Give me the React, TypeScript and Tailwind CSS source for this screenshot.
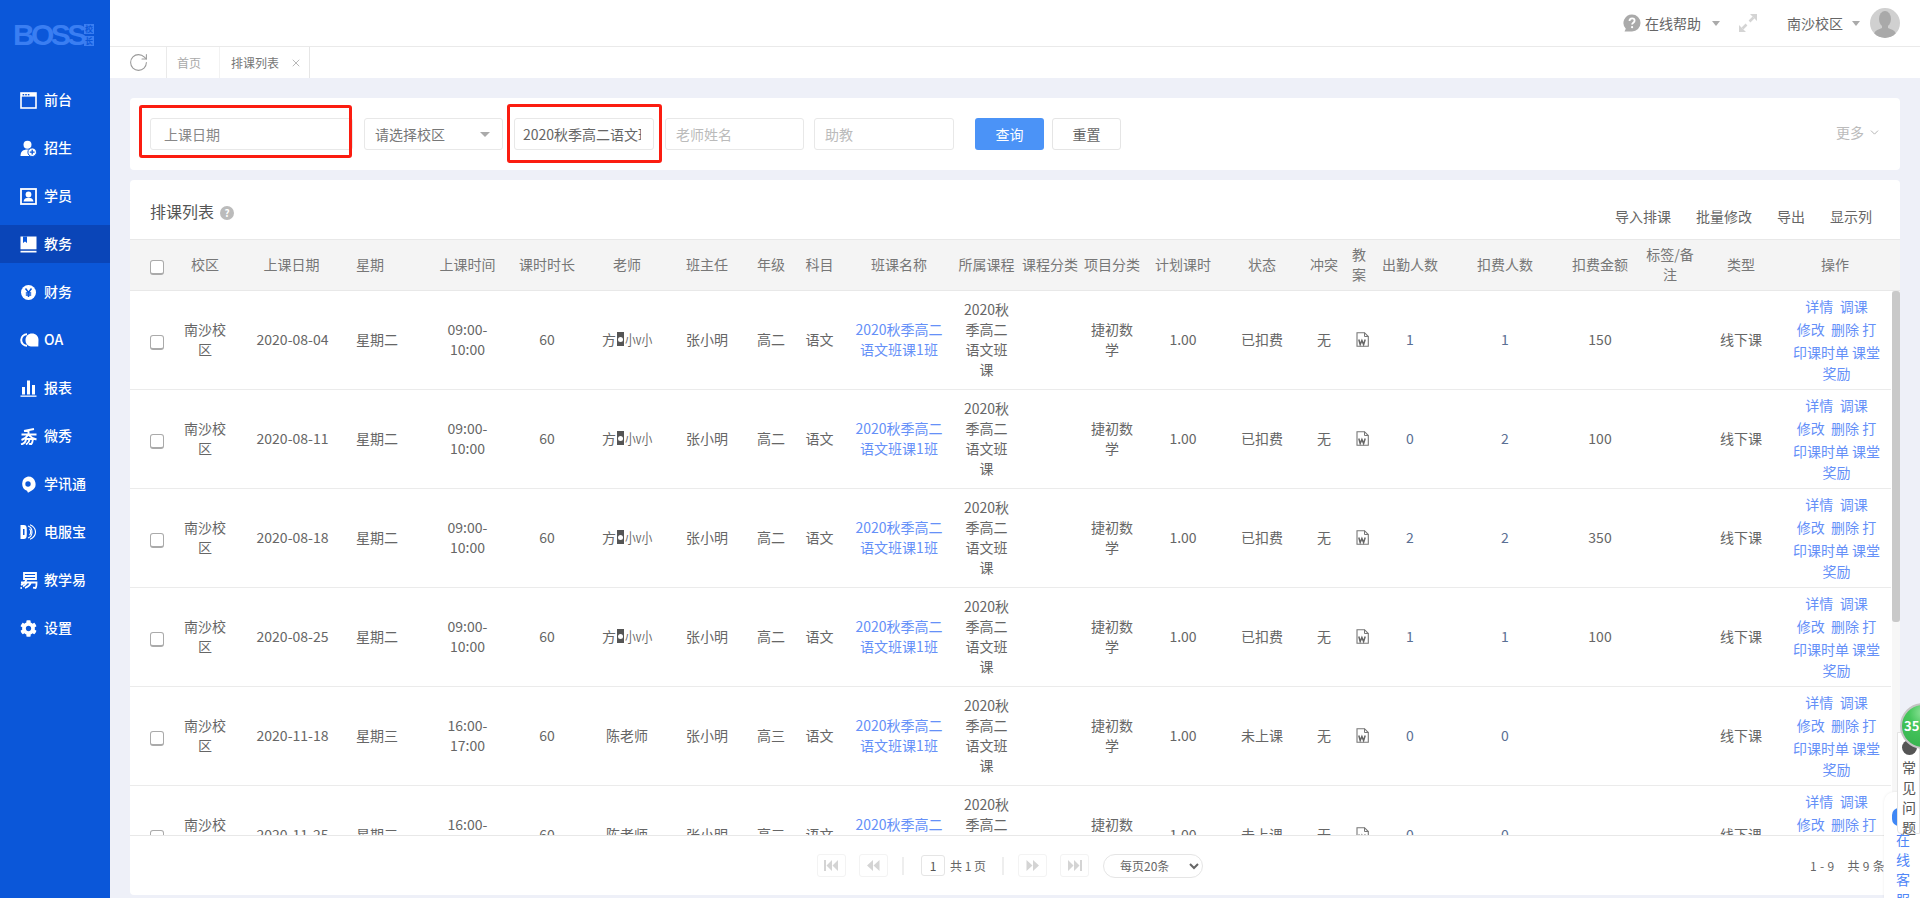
import React from "react";
import { RotateCw, X, ChevronDown } from "lucide-react";
import { FaCog } from "react-icons/fa";

const colClasses = [
  "w-[53px]", "w-[44px]", "w-[129px]", "w-[74px]", "w-[75px]", "w-[84px]", "w-[76px]", "w-[84px]",
  "w-[44px]", "w-[53px]", "w-[106px]", "w-[69px]", "w-[58px]", "w-[66px]", "w-[76px]", "w-[82px]",
  "w-[42px]", "w-[28px]", "w-[74px]", "w-[116px]", "w-[74px]", "w-[66px]", "w-[76px]", "w-[112px]",
];

const headers = [
  "校区", "上课日期", "星期", "上课时间", "课时时长", "老师", "班主任", "年级", "科目", "班课名称", "所属课程",
  "课程分类", "项目分类", "计划课时", "状态", "冲突", "教案", "出勤人数", "扣费人数", "扣费金额", "标签/备注", "类型", "操作",
];

const rows = [
  { date: "2020-08-04", week: "星期二", time: ["09:00-", "10:00"], t: "f", grade: "高二", st: "已扣费", a: "1", b: "1", c: "150" },
  { date: "2020-08-11", week: "星期二", time: ["09:00-", "10:00"], t: "f", grade: "高二", st: "已扣费", a: "0", b: "2", c: "100" },
  { date: "2020-08-18", week: "星期二", time: ["09:00-", "10:00"], t: "f", grade: "高二", st: "已扣费", a: "2", b: "2", c: "350" },
  { date: "2020-08-25", week: "星期二", time: ["09:00-", "10:00"], t: "f", grade: "高二", st: "已扣费", a: "1", b: "1", c: "100" },
  { date: "2020-11-18", week: "星期三", time: ["16:00-", "17:00"], t: "c", grade: "高三", st: "未上课", a: "0", b: "0", c: "" },
  { date: "2020-11-25", week: "星期三", time: ["16:00-", "17:00"], t: "c", grade: "高三", st: "未上课", a: "0", b: "0", c: "" },
];

const W = "#ffffff";
const B = "#0b57d9";

const icons: Record<string, React.ReactNode> = {
  front: (
    <svg width="17" height="17" viewBox="0 0 17 17">
      <rect x="1" y="1" width="15" height="15" fill="none" stroke={W} strokeWidth="1.6" />
      <rect x="1" y="1" width="15" height="3.6" fill={W} />
      <rect x="2.6" y="2" width="1.6" height="1.4" fill={B} />
      <rect x="5.2" y="2" width="1.6" height="1.4" fill={B} />
      <rect x="7.8" y="2" width="1.6" height="1.4" fill={B} />
    </svg>
  ),
  enroll: (
    <svg width="17" height="17" viewBox="0 0 17 17">
      <circle cx="7.5" cy="4.8" r="4" fill={W} />
      <path d="M0.5 16c0-4.5 2.500-6.500 7-6.500 1.500 0 2.700.2 3.500.7V16z" fill={W} />
      <circle cx="12.200" cy="12.200" r="4.300" fill={W} stroke={B} strokeWidth="1" />
      <path d="M12.200 9.800v4.800M9.800 12.200h4.800" stroke={B} strokeWidth="1.300" />
    </svg>
  ),
  student: (
    <svg width="17" height="17" viewBox="0 0 17 17">
      <rect x="1" y="1" width="15" height="15" fill="none" stroke={W} strokeWidth="1.800" />
      <circle cx="8.500" cy="6.500" r="2.900" fill={W} />
      <path d="M3.500 13.500c.4-2.800 2.400-3.800 5-3.800s4.600 1 5 3.800z" fill={W} />
    </svg>
  ),
  edu: (
    <svg width="17" height="17" viewBox="0 0 17 17">
      <rect x="0.500" y="0.500" width="16" height="12.800" fill={W} />
      <path d="M3 0.500h4v6.500l-2-1.600-2 1.600z" fill={B} />
      <rect x="0.500" y="14.800" width="16" height="1.700" fill={W} />
    </svg>
  ),
  finance: (
    <svg width="17" height="17" viewBox="0 0 17 17">
      <circle cx="8.500" cy="8.500" r="7.500" fill={W} />
      <path d="M5.500 4.500l3 4 3-4M8.500 8.500v4.500M5.800 9h5.400M5.800 11h5.400" fill="none" stroke={B} strokeWidth="1.500" />
    </svg>
  ),
  oa: (
    <svg width="19" height="14" viewBox="0 0 19 14">
      <path d="M7 1.200a5.800 5.800 0 1 0 0 11.600" fill="none" stroke={W} strokeWidth="2" />
      <path d="M12 0.500c3.700 0 6.500 2.700 6.500 6.300 0 2.300-.2 4.600-.2 6.700H11c-3.500-.3-5.500-3-5.500-6.400C5.500 3.200 8.300.5 12 .5z" fill={W} />
    </svg>
  ),
  report: (
    <svg width="17" height="17" viewBox="0 0 17 17">
      <rect x="2" y="7" width="3" height="7.500" fill={W} />
      <rect x="7" y="0.500" width="3" height="14" fill={W} />
      <rect x="12" y="5" width="3" height="9.500" fill={W} />
      <rect x="0.500" y="15.500" width="16" height="1.300" fill={W} />
    </svg>
  ),
  show: (
    <svg width="18" height="17" viewBox="0 0 18 17">
      <path d="M4 3L14 1M1.500 6.500h15M8.500 2.500v5M8 7C6.500 9.500 4 11 1.500 12M9 7c1.500 2 4 3.500 7.500 4.500M6 10.500C6 13 4.500 15.500 1 16.500M6 11h7c-.3 2.500-1 4.500-2 5.500l-2-.8M9.500 11.500C9.500 13.500 8 15 6 16.500" fill="none" stroke={W} strokeWidth="1.900" />
    </svg>
  ),
  xun: (
    <svg width="16" height="17" viewBox="0 0 16 17">
      <path d="M8 0.500a7.500 7.500 0 0 1 3.400 14.200L8 16.800l-1-2A7.500 7.500 0 0 1 8 .5z" fill={W} />
      <circle cx="8" cy="8" r="2.700" fill={B} />
    </svg>
  ),
  dian: (
    <svg width="16" height="16" viewBox="0 0 16 16">
      <path d="M0.500 1H4c3 0 2.800 3 2.800 7S7 15 4 15H0.500z" fill={W} />
      <path d="M3 5h1.500v6H3z" fill={B} />
      <path d="M8 2c3 1 4 3.500 4 6s-1 5-4 6M9.500 5c1 .8 1.200 1.800 1.200 3s-.3 2.200-1.200 3M10 .8c3.500 1.600 5.500 4 5.500 7.200S13.500 13.600 10 15.200" fill="none" stroke={W} strokeWidth="1.100" />
    </svg>
  ),
  yi: (
    <svg width="18" height="17" viewBox="0 0 18 17">
      <path d="M4 1h12v6H4zM4 4h12" fill="none" stroke={W} strokeWidth="1.800" />
      <path d="M1 10.500h15.500c0 3-.4 5-1 5.500l-2.500-.3M6.500 7.500C5.500 10 3.500 12 1 13M11 10.500c-1 2.500-3 4.500-6 5.500M6.500 10.800C6 12 4.500 13.600 3 14.500" fill="none" stroke={W} strokeWidth="1.800" />
      <circle cx="1.200" cy="16" r="0.900" fill={W} />
    </svg>
  ),
  gear: <FaCog size={17} color={W} />,
};

const menu = [
  ["front", "前台"], ["enroll", "招生"], ["student", "学员"], ["edu", "教务"], ["finance", "财务"], ["oa", "OA"],
  ["report", "报表"], ["show", "微秀"], ["xun", "学讯通"], ["dian", "电服宝"], ["yi", "教学易"], ["gear", "设置"],
];

function Sidebar() {
  return (
    <aside className="w-[110px] shrink-0 h-full bg-[#0b57d9] text-white">
      <div className="h-[76px] pt-[24px] pl-[13px] flex gap-[2px]">
        <div className="w-[69px] h-[22px]">
          <span className="font-['Liberation_Sans',sans-serif] font-bold text-[30px] leading-[22px] tracking-[-3.600px] text-[#3a7ef2]">BOSS</span>
        </div>
        <div className="flex flex-col gap-[2px]">
          <span className="w-[10px] h-[10px] bg-[#3a7ef2] text-[#0b57d9] text-[8px] leading-[10px] text-center font-bold">校</span>
          <span className="w-[10px] h-[10px] bg-[#3a7ef2] text-[#0b57d9] text-[8px] leading-[10px] text-center font-bold">长</span>
        </div>
      </div>
      <nav>
        {menu.map(([k, label]) => (
          <div key={k} className="h-[48px] flex items-center">
            <div className={`w-full h-[38px] flex items-center pl-[20px] ${k === "edu" ? "bg-[#0a45b8]" : ""}`}>
              <span className="w-[24px] flex items-center">{icons[k]}</span>
              <span className="text-sm font-medium mb-[2px]">{label}</span>
            </div>
          </div>
        ))}
      </nav>
    </aside>
  );
}

function Caret() {
  return <span className="inline-block w-0 h-0 border-x-[4.5px] border-x-transparent border-t-[5px] border-t-[#aaaaaa]" />;
}

function TopBar() {
  return (
    <header className="h-[47px] shrink-0 bg-white border-b border-[#eaeaea] flex items-center justify-end pr-[20px] text-sm text-[#666666]">
      <svg width="18" height="18" viewBox="0 0 18 18" className="mr-[4px]">
        <path d="M9 0.500a8.500 8.500 0 0 1 0 17H1.500l1.300-2.700A8.500 8.500 0 0 1 9 .5z" fill="#aaaaaa" />
        <path d="M6.500 7c0-1.600 1.100-2.600 2.600-2.600s2.500 1 2.500 2.300c0 2-2.500 2-2.500 3.700" fill="none" stroke="#ffffff" strokeWidth="1.800" />
        <circle cx="9.100" cy="13.200" r="1.100" fill="#ffffff" />
      </svg>
      <span>在线帮助</span>
      <span className="ml-[11px] flex"><Caret /></span>
      <svg width="18" height="18" viewBox="0 0 18 18" className="ml-[19px]">
        <path d="M11 0h7v7zM0 18v-7l7 7z" fill="#d4d4d4" />
        <path d="M14.500 3.500L10.500 7.500M3.500 14.500L7.500 10.500" fill="none" stroke="#d4d4d4" strokeWidth="2.500" />
      </svg>
      <span className="ml-[30px]">南沙校区</span>
      <span className="ml-[9px] flex"><Caret /></span>
      <span className="ml-[10px] w-[30px] h-[30px] rounded-full bg-[#d0d0d0] overflow-hidden flex justify-center">
        <svg width="30" height="30" viewBox="0 0 30 30">
          <ellipse cx="15" cy="11" rx="6" ry="8" fill="#a9a9a9" />
          <path d="M12 17v3c-3 1.500-7 2-8 6 3 3 7 4 11 4s8-1 11-4c-1-4-5-4.500-8-6v-3z" fill="#a9a9a9" />
        </svg>
      </span>
    </header>
  );
}

function Tabs() {
  return (
    <div className="h-[31px] shrink-0 bg-white flex text-xs">
      <div className="w-[57px] flex items-center justify-center border-r border-[#eaeaea]">
        <RotateCw size={21} strokeWidth={1.2} color="#999999" />
      </div>
      <div className="w-[53px] border-r border-[#f2f2f2] flex items-center pl-[10px] text-[#aaaaaa]">首页</div>
      <div className="w-[90px] border-r border-[#e6e6e6] flex items-center pl-[11px] text-[#777777]">
        <span>排课列表</span>
        <X size={12} strokeWidth={1.4} color="#999999" className="ml-[11px]" />
      </div>
    </div>
  );
}

function Filters() {
  const inputCls = "h-[32px] rounded-[3px] border border-[#e8e8e8] bg-white text-sm outline-none";
  return (
    <section className="relative h-[72px] shrink-0 mt-[20px] bg-white rounded-[4px] flex items-center pl-[20px]">
      <input readOnly placeholder="上课日期" className={`${inputCls} w-[203px] pl-[13px] placeholder:text-[#888888]`} />
      <div className={`${inputCls} w-[139px] ml-[11px] pl-[10px] pr-[12px] flex items-center justify-between text-[#777777]`}>
        <span>请选择校区</span>
        <span className="inline-block w-0 h-0 border-x-[5px] border-x-transparent border-t-[5px] border-t-[#aaaaaa]" />
      </div>
      <input readOnly value="2020秋季高二语文班课1班" className={`${inputCls} w-[140px] ml-[11px] pl-[8px] pr-[12px] text-[#666666]`} />
      <input readOnly placeholder="老师姓名" className={`${inputCls} w-[139px] ml-[11px] pl-[10px] placeholder:text-[#bbbbbb]`} />
      <input readOnly placeholder="助教" className={`${inputCls} w-[140px] ml-[10px] pl-[10px] placeholder:text-[#bbbbbb]`} />
      <button className="w-[69px] h-[32px] ml-[21px] rounded-[3px] bg-[#4b93f7] text-white text-sm">查询</button>
      <button className="w-[69px] h-[32px] ml-[8px] rounded-[3px] bg-white border border-[#e5e5e5] text-[#666666] text-sm">重置</button>
      <span className="ml-auto mr-[19px] flex items-center gap-[4px] text-sm text-[#bbbbbb] mb-[4px]">
        更多
        <ChevronDown size={13} strokeWidth={1.6} color="#aaaaaa" />
      </span>
      <div className="absolute left-[9px] top-[7px] w-[213px] h-[53px] border-[3px] border-[#fb1c10] rounded-[3px]" />
      <div className="absolute left-[377px] top-[6px] w-[155px] h-[59px] border-[3px] border-[#fb1c10] rounded-[3px]" />
    </section>
  );
}

function Check() {
  return <span className="inline-block w-[14px] h-[15px] rounded-[3px] border border-[#aaaaaa] border-b-2 bg-white align-middle" />;
}

function Cols() {
  return (
    <colgroup>
      {colClasses.map((c, i) => (
        <col key={i} className={c} />
      ))}
    </colgroup>
  );
}

function Teacher({ t }: { t: string }) {
  if (t === "c") return <>陈老师</>;
  return (
    <span className="inline-flex items-center justify-center">
      方
      <span className="inline-flex items-center justify-center w-[7px] h-[14px] bg-[#555555] mx-[1px]">
        <span className="w-[5px] h-[5px] rounded-full bg-white" />
      </span>
      <span className="inline-block w-[27px] origin-left scale-x-[0.77] whitespace-nowrap text-left">小v小</span>
    </span>
  );
}

function WordIcon() {
  return (
    <svg width="13" height="15" viewBox="0 0 13 15" className="block ml-[11px]">
      <path d="M1 .7h7.500L12.300 4.500v9.800H1z" fill="#ffffff" stroke="#777777" strokeWidth="1.100" />
      <path d="M8.500.7v3.800h3.800" fill="none" stroke="#777777" strokeWidth="1" />
      <path d="M2.800 7.500l1.400 5 1.700-4 1.700 4 1.600-5" fill="none" stroke="#666666" strokeWidth="1.500" />
    </svg>
  );
}

function Ops() {
  return (
    <div className="text-[#6590f8] leading-[23px] pl-[3px]">
      <div>详情&nbsp;&nbsp;调课</div>
      <div>修改&nbsp;&nbsp;删除&nbsp;打</div>
      <div className="leading-[22px]">印课时单&nbsp;课堂</div>
      <div className="leading-[20px]">奖励</div>
    </div>
  );
}

function Table() {
  const td = "border-b border-[#ebebeb] pb-[2px]";
  return (
    <div className="relative h-[596px] shrink-0">
      <div className="h-[52px] bg-[#f4f4f4] border-y border-[#e8e8e8]">
        <table className="w-[1761px] table-fixed text-sm text-[#777777]">
          <Cols />
          <thead>
            <tr className="h-[50px]">
              <th className="font-normal"><Check /></th>
              {headers.map((h, i) => (
                <th
                  key={h}
                  className={`font-normal leading-[20px] pb-[2px] ${i === 2 ? "text-left" : "text-center"} ${i === 16 ? "px-[2px]" : ""} ${i === 20 ? "px-[4px]" : ""}`}
                >
                  {h}
                </th>
              ))}
            </tr>
          </thead>
        </table>
      </div>
      <div className="h-[544px] overflow-hidden">
        <table className="w-[1761px] table-fixed border-separate border-spacing-0 text-sm text-[#666666] leading-[20px]">
          <Cols />
          <tbody>
            {rows.map((r) => (
              <tr key={r.date} className="text-center">
                <td className="h-[99px] border-b border-[#ebebeb]"><Check /></td>
                <td className={td}>南沙校区</td>
                <td className={`${td} pl-[2px]`}>{r.date}</td>
                <td className={`${td} text-left`}>{r.week}</td>
                <td className={td}>{r.time[0]}<br />{r.time[1]}</td>
                <td className={td}>60</td>
                <td className={td}><Teacher t={r.t} /></td>
                <td className={td}>张小明</td>
                <td className={td}>{r.grade}</td>
                <td className={td}>语文</td>
                <td className={`${td} px-[4px] text-[#6590f8]`}>2020秋季高二语文班课1班</td>
                <td className={`${td} px-[10px]`}>2020秋季高二语文班课</td>
                <td className={td}></td>
                <td className={`${td} px-[10px]`}>捷初数学</td>
                <td className={td}>1.00</td>
                <td className={td}>{r.st}</td>
                <td className={td}>无</td>
                <td className={td}><WordIcon /></td>
                <td className={`${td} text-[#5a6f94]`}>{r.a}</td>
                <td className={`${td} text-[#5a6f94]`}>{r.b}</td>
                <td className={td}>{r.c}</td>
                <td className={td}></td>
                <td className={td}>线下课</td>
                <td className={td}><Ops /></td>
              </tr>
            ))}
          </tbody>
        </table>
      </div>
      <div className="absolute right-0 top-[52px] w-[8px] h-[544px] bg-[#f7f7f7]">
        <div className="w-[8px] h-[331px] rounded-[3px] bg-[#c9c9c9]" />
      </div>
    </div>
  );
}

function PageBtn({ kind, cls }: { kind: string; cls: string }) {
  const c = "#d4d4d4";
  return (
    <span className={`w-[29px] h-[23px] rounded-[3px] border border-[#f3f3f3] flex items-center justify-center ${cls}`}>
      <svg width="15" height="11" viewBox="0 0 15 11">
        {kind === "first" && <path d="M0 0h2v11H0zM8 0v11L2.500 5.500zM14 0v11L8.500 5.500z" fill={c} />}
        {kind === "prev" && <path d="M7 0v11L1 5.500zM13.500 0v11L7.500 5.500z" fill={c} />}
        {kind === "next" && <path d="M1.500 0v11l6-5.500zM8 0v11l6-5.500z" fill={c} />}
        {kind === "last" && <path d="M1 0v11l5.500-5.500zM7 0v11l5.500-5.500zM13 0h2v11h-2z" fill={c} />}
      </svg>
    </span>
  );
}

function Pager() {
  return (
    <div className="h-[60px] border-t border-[#e8e8e8] flex items-center pl-[687px] pr-[15px] text-xs text-[#666666]">
      <PageBtn kind="first" cls="" />
      <PageBtn kind="prev" cls="ml-[13px]" />
      <span className="w-[2px] h-[18px] bg-[#eeeeee] ml-[14px]" />
      <span className="w-[24px] h-[21px] ml-[17px] rounded-[3px] border border-[#e5e5e5] flex items-center justify-center text-[#555555]">1</span>
      <span className="ml-[5px] w-[48px]">共 1 页</span>
      <span className="w-[2px] h-[18px] bg-[#eeeeee] ml-[4px]" />
      <PageBtn kind="next" cls="ml-[14px]" />
      <PageBtn kind="last" cls="ml-[13px]" />
      <select defaultValue="20" className="w-[100px] h-[24px] ml-[14px] rounded-full border border-[#e5e5e5] bg-white pl-[12px] text-xs text-[#666666] outline-none">
        <option value="20">每页20条</option>
      </select>
      <span className="ml-auto flex gap-[13px] tracking-[0.300px]">
        <span>1 - 9</span>
        <span>共 9 条</span>
      </span>
    </div>
  );
}

function ListCard() {
  return (
    <section className="mt-[10px] h-[715px] shrink-0 bg-white rounded-[4px] overflow-hidden flex flex-col">
      <div className="h-[59px] shrink-0 flex items-center pl-[20px] pr-[28px] pt-[8px] text-sm text-[#666666]">
        <span className="text-base text-[#555555] mb-[5px]">排课列表</span>
        <span className="ml-[6px] mb-[2px] w-[14px] h-[14px] rounded-full bg-[#bbbbbb] text-white text-[10px] leading-[14px] text-center font-bold">?</span>
        <span className="ml-auto mt-[5px]">导入排课</span>
        <span className="ml-[25px] mt-[5px]">批量修改</span>
        <span className="ml-[25px] mt-[5px]">导出</span>
        <span className="ml-[25px] mt-[5px]">显示列</span>
      </div>
      <Table />
      <Pager />
    </section>
  );
}

function Floats() {
  return (
    <>
      <div className="absolute right-0 top-[792px] w-[36px] h-[106px] bg-white rounded-tl-[10px] text-[#4f86f7] text-sm leading-[20px] pl-[12px] pt-[37px] shadow-[0_0_3px_rgba(0,0,0,0.08)]">
        <span className="absolute left-[8px] top-[16px] w-[14px] h-[18px] rounded-full bg-[#3f87f5]" />
        在线客服
      </div>
      <div className="absolute right-0 top-[732px] w-[23px] h-[102px] bg-white border border-[#e3e3e3] rounded-bl-[4px] text-[#555555] text-sm leading-[20px] pl-[4px] pt-[24px]">
        <span className="absolute left-[4px] top-[7px] w-[15px] h-[15px] rounded-full bg-[#555555]" />
        常见问题
      </div>
      <div className="absolute left-[1900px] top-[703px] w-[46px] h-[46px] rounded-full border-2 border-[#c4c4c4] bg-[radial-gradient(circle_at_50%_18%,#8fe39a_0%,#45c65c_35%,#35b04c_100%)] text-white text-[13px] font-bold leading-[42px] pl-[2px]">
        35
      </div>
    </>
  );
}

export default function App() {
  return (
    <div className="relative w-[1920px] h-[898px] overflow-hidden flex bg-[#eef0f8] font-['Noto_Sans_CJK_SC','Noto_Sans',sans-serif]">
      <Sidebar />
      <main className="flex-1 min-w-0 flex flex-col">
        <TopBar />
        <Tabs />
        <div className="flex-1 px-[20px] flex flex-col">
          <Filters />
          <ListCard />
        </div>
      </main>
      <Floats />
    </div>
  );
}
